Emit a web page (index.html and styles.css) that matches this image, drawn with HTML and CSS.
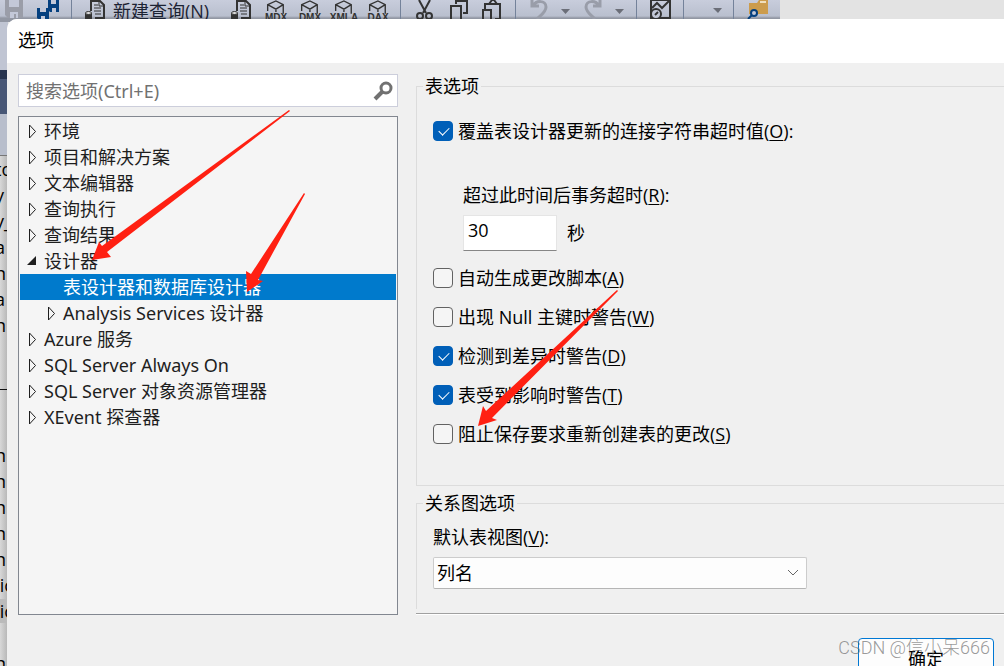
FILE: index.html
```html
<!DOCTYPE html>
<html lang="zh-CN">
<head>
    <meta charset="UTF-8">
    <title>选项</title>
    <link rel="stylesheet" href="styles.css">
</head>
<body>
    <svg class="defs">
        <symbol id="script" viewBox="0 0 22 22">
            <path d="M7 11V1h9l4 4v13h-9" fill="none" stroke="#333" stroke-width="2"/>
            <path d="M15 1v5h5M10 5h4M10 8h7M10 11h7M11 14h6" fill="none" stroke="#333"/>
            <path d="M1 13v7h7v-7z" fill="#333"/>
            <ellipse cx="4.500" cy="13" rx="3" ry="1.500" fill="#ddd" stroke="#333"/>
        </symbol>
        <symbol id="cube" viewBox="0 0 24 22">
            <path d="M4 11V4l9-4 8 4v10M4 4l9 5 8-5M13 9v3" fill="none" stroke="#333" stroke-width="1.500"/>
        </symbol>
        <symbol id="caret" viewBox="0 0 10 22">
            <path d="M1 9h9l-4.500 5z" fill="#6b6e78"/>
        </symbol>
        <symbol id="closed" viewBox="0 0 16 13">
            <path d="M1.500 0v13l6-6.500z" fill="none" stroke="#1e1e1e"/>
        </symbol>
    </svg>

    <div class="ide">
        <div class="toolbar">
            <button aria-label="保存"><svg width="22" height="22"><path d="M2 0h18v18H5l-3-3z" fill="#9a9da8"/><path d="M6 0h10v7H6zM7 12h8v6h-2v-4h-2v4H7z" fill="#c3c8d8"/></svg></button>
            <button aria-label="全部保存"><svg width="22" height="22"><path d="M11 0h11v12H13l-2-2zM0 8h12v12H2l-2-2z" fill="#05407f"/><path d="M14 0h5v4h-5zM3 8h6v4H3zM4 16h4v4H4zM15 8h4v4h-4z" fill="#c3c8d8"/></svg></button>
            <span class="sep"></span>
            <button class="new-query"><svg width="22" height="22"><use href="#script"/></svg>新建查询(N)</button>
            <button aria-label="脚本"><svg width="22" height="22"><use href="#script"/></svg></button>
            <button aria-label="MDX"><svg width="22" height="22"><use href="#cube"/><text x="12" y="21" class="cube-text">MDX</text></svg></button>
            <button aria-label="DMX"><svg width="22" height="22"><use href="#cube"/><text x="12" y="21" class="cube-text">DMX</text></svg></button>
            <button aria-label="XMLA"><svg width="22" height="22"><use href="#cube"/><text x="12" y="21" class="cube-text">XMLA</text></svg></button>
            <button aria-label="DAX"><svg width="22" height="22"><use href="#cube"/><text x="12" y="21" class="cube-text">DAX</text></svg></button>
            <span class="sep"></span>
            <button aria-label="剪切"><svg width="22" height="22" fill="none" stroke="#333" stroke-width="2"><path d="M6 0l7 13M17 0l-7 13"/><circle cx="7" cy="16" r="3"/><circle cx="16" cy="16" r="3"/></svg></button>
            <button aria-label="复制"><svg width="22" height="22" fill="none" stroke="#333" stroke-width="2"><path d="M9 4V1h11v12h-4M4 20V6h10v14"/></svg></button>
            <button aria-label="粘贴"><svg width="22" height="22" fill="none" stroke="#333" stroke-width="2"><path d="M4 9V4h15v15h-5M8 4l3-4h2l3 4M2 20V10h8v10"/></svg></button>
            <span class="sep"></span>
            <button aria-label="撤消"><svg width="20" height="22" fill="none" stroke="#999da9" stroke-width="3"><path d="M4 0v6h7M5 6c3-6 13-6 13 1 0 5-5 8-9 12"/></svg></button>
            <svg width="10" height="22"><use href="#caret"/></svg>
            <button aria-label="重做"><svg width="20" height="22" fill="none" stroke="#999da9" stroke-width="3"><path d="M18 0v6h-7M17 6C14 0 4 0 4 7c0 5 5 8 9 12"/></svg></button>
            <svg width="10" height="22"><use href="#caret"/></svg>
            <span class="sep"></span>
            <button aria-label="活动监视器"><svg width="22" height="22" fill="none" stroke="#333" stroke-width="2"><path d="M2 0h19v18H2zM3 8l5-5 5 5 7-7"/><circle cx="7" cy="14" r="5" fill="#c3c8d8"/><path d="M6 15l3-3"/></svg></button>
            <span class="sep"></span>
            <svg width="25" height="22"><path d="M17 8h9l-4 5z" fill="#6b6e78"/></svg>
            <span class="sep"></span>
            <button aria-label="查找"><svg width="22" height="22"><path d="M3 3h8l2-3h9v14H3z" fill="#cc9c4d"/><path d="M14 1h6v2h-6z" fill="#f0dfbd"/><circle cx="8" cy="13" r="3" fill="#c3c8d8" stroke="#05407f" stroke-width="2"/><path d="M6 15l-4 4" stroke="#05407f" stroke-width="2"/></svg></button>
        </div>

        <div class="side">
            <div class="side-top"></div>
            <div class="side-tab"></div>
            <div class="side-bar"></div>
            <pre class="code">to
y
y_
a
n
a
n

<span class="rule"></span>

n
n
n
n
n
 ic
<span class="current"> ic</span>

n</pre>
        </div>
    </div>

    <div class="dialog" role="dialog" aria-labelledby="title">
        <h1 id="title">选项</h1>
        <div class="content">
            <div class="left">
                <div class="search">
                    <input type="text" placeholder="搜索选项(Ctrl+E)" aria-label="搜索选项">
                    <svg width="22" height="22" fill="none" stroke="#717171"><circle cx="14" cy="8" r="5" stroke-width="3"/><path d="M10 12l-7 7" stroke-width="4"/></svg>
                </div>
                <ul class="tree">
                    <li><svg class="arrow"><use href="#closed"/></svg>环境</li>
                    <li><svg class="arrow"><use href="#closed"/></svg>项目和解决方案</li>
                    <li><svg class="arrow"><use href="#closed"/></svg>文本编辑器</li>
                    <li><svg class="arrow"><use href="#closed"/></svg>查询执行</li>
                    <li><svg class="arrow"><use href="#closed"/></svg>查询结果</li>
                    <li><svg class="arrow"><path d="M8 1v9H-1z" fill="#1e1e1e"/></svg>设计器</li>
                    <li class="child selected">表设计器和数据库设计器</li>
                    <li class="child"><svg class="arrow"><use href="#closed"/></svg>Analysis Services 设计器</li>
                    <li><svg class="arrow"><use href="#closed"/></svg>Azure 服务</li>
                    <li><svg class="arrow"><use href="#closed"/></svg>SQL Server Always On</li>
                    <li><svg class="arrow"><use href="#closed"/></svg>SQL Server 对象资源管理器</li>
                    <li><svg class="arrow"><use href="#closed"/></svg>XEvent 探查器</li>
                </ul>
            </div>

            <form class="right">
                <fieldset class="table-options">
                    <legend>表选项</legend>
                    <label class="check"><input type="checkbox" checked><span>覆盖表设计器更新的连接字符串超时值(<u>O</u>):</span></label>
                    <div class="timeout">
                        <label for="timeout">超过此时间后事务超时(<u>R</u>):</label>
                        <div class="timeout-row">
                            <input type="text" id="timeout" value="30">
                            <span>秒</span>
                        </div>
                    </div>
                    <label class="check"><input type="checkbox"><span>自动生成更改脚本(<u>A</u>)</span></label>
                    <label class="check"><input type="checkbox"><span>出现 Null 主键时警告(<u>W</u>)</span></label>
                    <label class="check"><input type="checkbox" checked><span>检测到差异时警告(<u>D</u>)</span></label>
                    <label class="check"><input type="checkbox" checked><span>表受到影响时警告(<u>T</u>)</span></label>
                    <label class="check"><input type="checkbox"><span>阻止保存要求重新创建表的更改(<u>S</u>)</span></label>
                </fieldset>

                <fieldset class="diagram-options">
                    <legend>关系图选项</legend>
                    <label for="view">默认表视图(<u>V</u>):</label>
                    <div class="select">
                        <select id="view">
                            <option>列名</option>
                        </select>
                        <svg width="12" height="8" fill="none" stroke="#666"><path d="M1 1l5 5 5-5"/></svg>
                    </div>
                </fieldset>

                <div class="footer">
                    <button type="button">确定</button>
                </div>
            </form>
        </div>
    </div>

    <svg class="pointers" fill="#ff2012">
        <path d="M289 110L102 246 99 242 92 260 111 257 107 252 290 111z"/>
        <path d="M304 193L251 274 246 271 247 292 263 281 258 280 305 194z"/>
        <path d="M617 290L486 411 483 406 478 426 497 420 492 418 618 291z"/>
    </svg>
    <div class="watermark">CSDN @信小呆666</div>
</body>
</html>
```
FILE: styles.css
```css
* {
    box-sizing: border-box;
}

body {
    margin: 0;
    height: 100vh;
    position: relative;
    overflow: hidden;
    font-family: "Open Sans", "Noto Sans CJK SC", sans-serif;
    font-size: 18px;
    line-height: 26px;
    color: #000;
}

button, input, select {
    font: inherit;
    color: inherit;
}

.defs {
    position: absolute;
    width: 0;
    height: 0;
}

/* main window behind the dialog */
.ide {
    height: 100%;
    overflow: hidden;
    background: #e3e3e3;
}

.toolbar {
    display: flex;
    align-items: center;
    gap: 12px;
    width: fit-content;
    height: 22px;
    padding: 0 12px 0 3px;
    background: linear-gradient(#c8cddc, #b9bfce 16px, #9297a3 18px);
}

.toolbar button {
    display: flex;
    align-items: center;
    height: 22px;
    padding: 0;
    border: none;
    background: none;
}

.toolbar svg {
    flex: none;
    overflow: visible;
}

.toolbar .new-query {
    gap: 7px;
    padding-right: 9px;
    color: #1c2333;
    line-height: 20px;
    white-space: nowrap;
}

.sep {
    width: 1px;
    height: 22px;
    background: #74829a;
}

.cube-text {
    font: bold 10px "Liberation Sans", sans-serif;
    text-anchor: middle;
    fill: #333;
}

.side {
    width: 8px;
    overflow: hidden;
    background: linear-gradient(90deg, #d8d8d8, #b4b4b4);
}

.side-top {
    height: 48px;
    background: #c0c5d3;
}

.side-tab {
    height: 44px;
    background: #485776;
    border-top: 9px solid #27344f;
}

.side-bar {
    height: 42px;
    background: #b8becc;
    border-bottom: 1px solid #777;
}

.code {
    margin: 0 0 0 -5px;
    font: inherit;
}

.rule {
    display: block;
    height: 26px;
    border-bottom: 1px solid #111;
}

.current {
    background: #bbb;
}

.dialog {
    position: absolute;
    top: 19px;
    right: 0;
    bottom: 0;
    left: 7px;
    overflow: hidden;
    background: #f0f0f0;
    border-top-left-radius: 10px;
}

h1 {
    margin: 0;
    height: 44px;
    padding-left: 11px;
    background: #fff;
    font-size: 18px;
    font-weight: normal;
    line-height: 42px;
}

.content {
    display: flex;
    gap: 18px;
    padding: 11px 0 0 11px;
}

.left {
    flex: 0 0 380px;
    font-family: "Noto Sans", "Noto Sans CJK SC", sans-serif;
    color: #1e1e1e;
}

.search {
    display: flex;
    align-items: center;
    height: 33px;
    margin-bottom: 9px;
    padding: 0 3px 0 7px;
    background: #fff;
    border: 1px solid #cccedb;
}

.search input {
    flex: 1;
    min-width: 0;
    padding: 0;
    border: none;
    outline: none;
    background: none;
}

.search input::placeholder {
    color: #717171;
}

.tree {
    height: 499px;
    margin: 0;
    padding: 1px;
    list-style: none;
    background: #f5f5f5;
    border: 1px solid #828790;
}

.tree li {
    display: flex;
    align-items: center;
    height: 26px;
    padding-left: 8px;
}

.tree .child {
    padding-left: 27px;
}

.tree .selected {
    padding-left: 43px;
    background: #007acc;
    color: #fff;
}

.arrow {
    flex: none;
    width: 16px;
    height: 13px;
    overflow: visible;
}

.right {
    flex: 1;
    min-width: 0;
}

fieldset {
    margin: 0;
    min-width: 0;
    border: 1px solid #dcdcdc;
    border-right: none;
}

legend {
    margin-left: -10px;
    padding: 0 2px;
    line-height: 24px;
}

u {
    text-underline-offset: 2px;
}

.table-options {
    padding: 13px 0 32px 16px;
}

.check {
    display: flex;
    align-items: center;
    gap: 5px;
    height: 39px;
    white-space: nowrap;
}

input[type="checkbox"] {
    appearance: none;
    flex: none;
    width: 20px;
    height: 20px;
    margin: 0;
    background: #f5f5f5;
    border: 1px solid #626262;
    border-radius: 4px;
}

input[type="checkbox"]:checked {
    background: #005fb8;
    border-color: #005fb8;
}

input[type="checkbox"]:checked::after {
    content: "";
    display: block;
    width: 5px;
    height: 9px;
    margin: 3px 0 0 7px;
    border: solid #fff;
    border-width: 0 1px 1px 0;
    transform: rotate(45deg);
}

.timeout {
    margin: 32px 0 7px 30px;
}

.timeout label {
    display: block;
}

.timeout-row {
    display: flex;
    align-items: center;
    gap: 10px;
    margin-top: 7px;
}

.timeout-row input {
    width: 94px;
    height: 36px;
    padding: 0 4px 6px;
    background: #fff;
    border: 1px solid #e5e5e5;
    border-bottom-color: #868686;
}

.diagram-options {
    margin-top: 5px;
    padding: 9px 0 20px 16px;
    border-bottom: none;
}

.diagram-options label {
    display: block;
}

.select {
    position: relative;
    width: 374px;
    max-width: 100%;
    margin-top: 7px;
}

.select select {
    appearance: none;
    display: block;
    width: 100%;
    height: 32px;
    padding: 0 3px;
    background: #fdfdfd;
    border: 1px solid #ccc;
    border-bottom-color: #b5b5b5;
    border-radius: 2px;
}

.select svg {
    position: absolute;
    top: 12px;
    right: 8px;
}

.footer {
    display: flex;
    justify-content: flex-end;
    margin-top: 4px;
    padding: 24px 10px 0 0;
    border-top: 1px solid #a0a0a0;
    box-shadow: inset 0 1px #fff;
}

.footer button {
    width: 136px;
    height: 42px;
    padding: 0;
    background: #fdfdfd;
    border: 1px solid #0078d4;
    border-radius: 4px;
}

/* red pointers drawn over the window */
.pointers {
    position: absolute;
    top: 0;
    left: 0;
    width: 100%;
    height: 100%;
    pointer-events: none;
}

.watermark {
    position: absolute;
    right: 14px;
    bottom: 5px;
    color: rgba(110, 110, 110, 0.7);
    font-family: Roboto, "Noto Sans CJK SC", sans-serif;
    font-weight: 300;
}
```
